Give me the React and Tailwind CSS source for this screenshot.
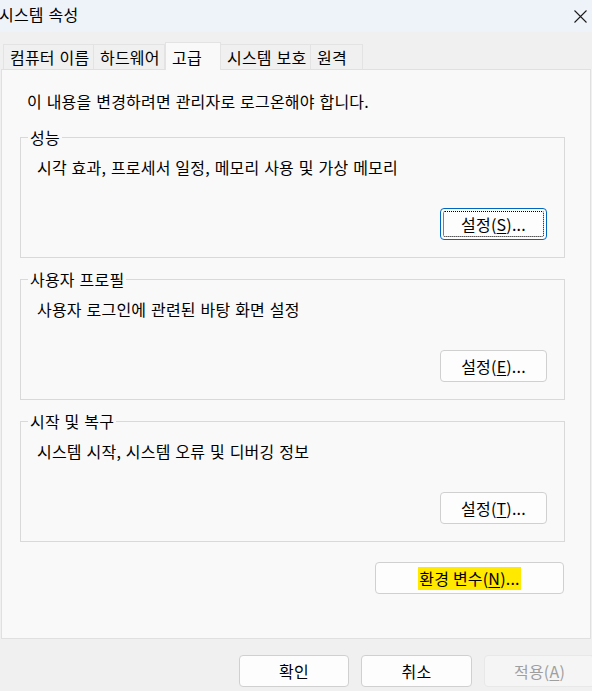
import React from 'react';

const font = { fontFamily: '"Noto Sans CJK KR", "Noto Sans", sans-serif' };

function Tab({ label, active, className }) {
    if (active) {
        return (
            <div className={`relative z-10 h-[28px] flex items-center pl-[6px] bg-[#f9f9f9] border border-b-0 border-[#e3e3e3] ${className}`}>
                {label}
            </div>
        );
    }
    return (
        <div className={`h-[26px] flex items-center pb-[1px] pl-[6px] bg-[#f0f0f0] border-t border-r border-[#e3e3e3] ${className}`}>
            {label}
        </div>
    );
}

function Btn({ children, focused, disabled, className = '' }) {
    return (
        <button
            disabled={disabled}
            className={`relative h-[32px] flex items-center justify-center rounded-[4px] border text-[16px] leading-[20px] ${
                focused
                    ? 'border-[#0067c0] bg-[#fdfdfd] text-black'
                    : disabled
                        ? 'border-[#e8e8e8] bg-[#f5f5f5] text-[#9f9f9f]'
                        : 'border-[#d0d0d0] bg-[#fdfdfd] text-black'
            } ${className}`}
        >
            {/* focus rectangle */}
            {focused && <span className="absolute inset-[2px] border border-dotted border-black rounded-[2px]" />}
            {children}
        </button>
    );
}

function Group({ title, desc, btn }) {
    return (
        <div className="mx-[18px] mr-[25px] border border-[#d9d9d9] pl-[16px] pr-[17px] pb-[17px] flex flex-col">
            <div className="-mt-[11px] -ml-[9px] w-fit px-[2px] bg-[#f9f9f9] leading-[20px]">{title}</div>
            <div className="mt-[10px] leading-[20px]">{desc}</div>
            <div className="mt-[31px] flex justify-end">{btn}</div>
        </div>
    );
}

export default function App() {
    return (
        <div className="w-[592px] h-[691px] bg-[#f0f0f0] text-[16px] tracking-[0.2px] [word-spacing:1px] text-black overflow-hidden flex flex-col" style={font}>
            {/* Title bar */}
            <div className="h-[32px] shrink-0 bg-[#eef2f9] flex items-center justify-between">
                <span className="-ml-[1px] pb-[4px] leading-[20px]">시스템 속성</span>
                <svg width="13" height="13" viewBox="0 0 13 13" className="mr-[5px] mt-[1px]">
                    <path d="M0.5 0.5 L12.5 12.5 M12.5 0.5 L0.5 12.5" stroke="#1b1b1b" strokeWidth="1.1" fill="none" />
                </svg>
            </div>

            {/* Tabs */}
            <div className="mt-[10px] -mb-[1px] pl-[3px] h-[28px] flex items-end shrink-0">
                <Tab label="컴퓨터 이름" className="w-[91px] border-l" />
                <Tab label="하드웨어" className="w-[71px]" />
                <Tab label="고급" active className="w-[56px]" />
                <Tab label="시스템 보호" className="w-[90px] pl-[5px]" />
                <Tab label="원격" className="w-[52px]" />
            </div>

            {/* Tab page */}
            <div className="mx-[1px] h-[570px] shrink-0 bg-[#f9f9f9] border border-[#e0e0e0] flex flex-col">
                <div className="mt-[21px] ml-[25px] leading-[20px]">이 내용을 변경하려면 관리자로 로그온해야 합니다.</div>

                <div className="mt-[26px] flex flex-col gap-[21px]">
                    <Group
                        title="성능"
                        desc="시각 효과, 프로세서 일정, 메모리 사용 및 가상 메모리"
                        btn={<Btn focused className="w-[107px]">설정(<u className="underline-offset-2">S</u>)...</Btn>}
                    />
                    <Group
                        title="사용자 프로필"
                        desc="사용자 로그인에 관련된 바탕 화면 설정"
                        btn={<Btn className="w-[107px]">설정(<u className="underline-offset-2">E</u>)...</Btn>}
                    />
                    <Group
                        title="시작 및 복구"
                        desc="시스템 시작, 시스템 오류 및 디버깅 정보"
                        btn={<Btn className="w-[107px]">설정(<u className="underline-offset-2">T</u>)...</Btn>}
                    />
                </div>

                <div className="mt-[20px] mr-[26px] flex justify-end">
                    <Btn className="w-[189px]">
                        <span className="bg-[#ffe900] leading-[23px] px-[1px]">
                            환경 변수(<u className="underline-offset-2">N</u>)...
                        </span>
                    </Btn>
                </div>
            </div>

            {/* Dialog buttons */}
            <div className="mt-[16px] pl-[239px] flex gap-[12px]">
                <Btn className="w-[110px] shrink-0">확인</Btn>
                <Btn className="w-[111px] shrink-0">취소</Btn>
                <Btn disabled className="w-[111px] shrink-0">적용(<u className="underline-offset-2">A</u>)</Btn>
            </div>
        </div>
    );
}
